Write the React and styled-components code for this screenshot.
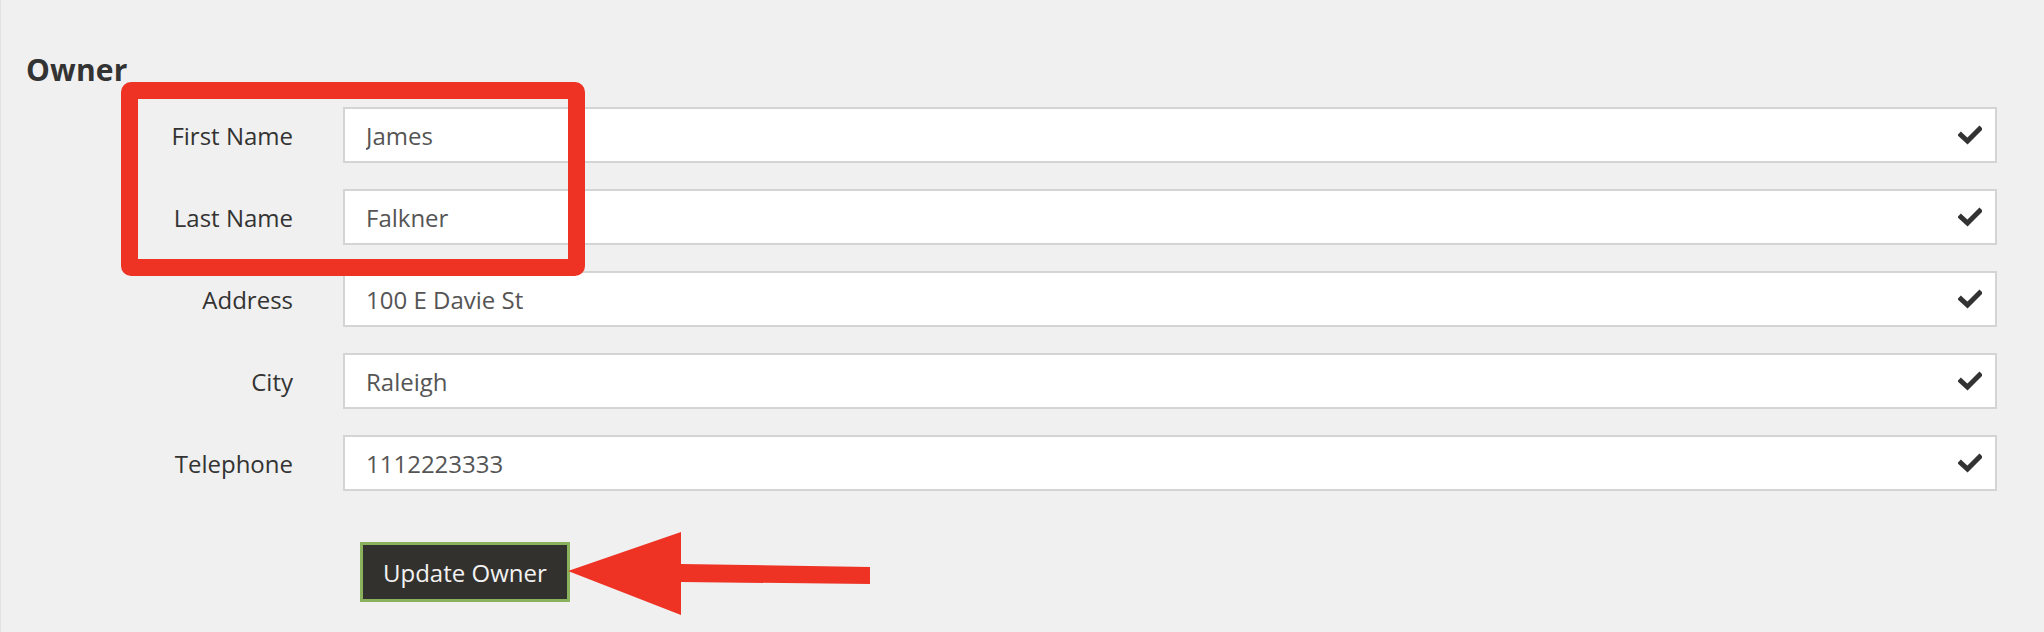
import styled, { createGlobalStyle } from "styled-components";

const GlobalStyle = createGlobalStyle`
  html, body {
    margin: 0;
    padding: 0;
    background: #f0f0f0;
  }
  body {
    font-family: "Open Sans", "Liberation Sans", sans-serif;
    color: #333;
  }
`;

const fields = [
  { label: "First Name", value: "James" },
  { label: "Last Name", value: "Falkner" },
  { label: "Address", value: "100 E Davie St" },
  { label: "City", value: "Raleigh" },
  { label: "Telephone", value: "1112223333" },
];

function Check() {
  return (
    <CheckIcon viewBox="0 0 24 20" aria-hidden="true">
      <polyline points="3,10 9.5,16 21.5,4" />
    </CheckIcon>
  );
}

export default function App() {
  return (
    <>
      <GlobalStyle />
      <Page>
        <Heading>Owner</Heading>
        <Form>
          {fields.map((f) => (
            <Row key={f.label}>
              <Label>{f.label}</Label>
              <InputWrap>
                <Input value={f.value} readOnly />
                <Check />
              </InputWrap>
            </Row>
          ))}
          <ButtonRow>
            <Spacer />
            <SubmitButton type="button">Update Owner</SubmitButton>
          </ButtonRow>
        </Form>

        {/* annotation drawn over the form */}
        <Highlight />
        <Arrow viewBox="0 0 315 95" aria-hidden="true">
          <polygon points="7,46 120,7 120,39 309,42 309,59 120,57 120,90" />
        </Arrow>
      </Page>
    </>
  );
}

const Page = styled.div`
  position: relative;
  box-sizing: border-box;
  width: 2044px;
  height: 632px;
  padding: 50px 47px 0 27px;
  border-left: 1px solid #e2e2e2;
`;

const Heading = styled.h2`
  margin: 0 0 0 -2px;
  font-size: 30px;
  line-height: 40px;
  font-weight: 700;
  letter-spacing: 0.2px;
  color: #333;
`;

const Form = styled.form`
  display: flex;
  flex-direction: column;
  gap: 26px;
  margin-top: 17px;
`;

const Row = styled.div`
  display: grid;
  grid-template-columns: 265px 1fr;
  column-gap: 50px;
  align-items: center;
`;

const Label = styled.label`
  text-align: right;
  font-size: 24px;
  color: #333;
`;

const InputWrap = styled.div`
  position: relative;
  display: flex;
  align-items: center;
`;

const Input = styled.input`
  box-sizing: border-box;
  width: 100%;
  height: 56px;
  padding: 0 60px 0 21px;
  border: 2px solid #d4d4d4;
  border-radius: 0;
  background: #fff;
  font-family: "Open Sans", "Liberation Sans", sans-serif;
  font-size: 24px;
  color: #555;
  outline: none;
`;

const CheckIcon = styled.svg`
  position: absolute;
  right: 15px;
  width: 24px;
  height: 20px;
  fill: none;
  stroke: #333;
  stroke-width: 5;
  stroke-linecap: square;
  stroke-linejoin: miter;
`;

const ButtonRow = styled.div`
  display: grid;
  grid-template-columns: 265px 1fr;
  column-gap: 50px;
  margin-top: 25px;
  justify-items: start;
`;

const Spacer = styled.div``;

const SubmitButton = styled.button`
  margin-left: 17px;
  box-sizing: border-box;
  height: 60px;
  padding: 0 20px;
  border: 3px solid #8ab25c;
  background: #33312d;
  color: #f2f2f2;
  font-family: "Open Sans", "Liberation Sans", sans-serif;
  font-size: 24px;
  cursor: pointer;
`;

const Highlight = styled.div`
  position: absolute;
  left: 120px;
  top: 82px;
  box-sizing: border-box;
  width: 464px;
  height: 194px;
  border: 17px solid #ee3224;
  border-radius: 10px;
  pointer-events: none;
`;

const Arrow = styled.svg`
  position: absolute;
  left: 560px;
  top: 525px;
  width: 315px;
  height: 95px;
  fill: #ee3224;
  pointer-events: none;
`;
